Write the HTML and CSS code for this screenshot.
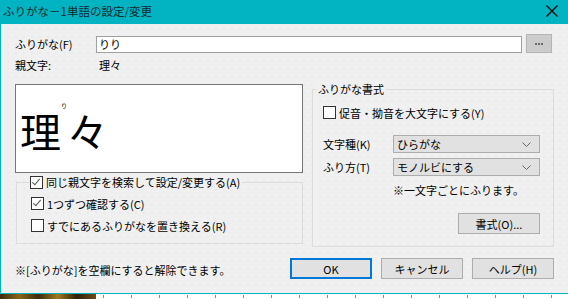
FILE: index.html
```html
<!DOCTYPE html>
<html lang="ja">
<head>
<meta charset="utf-8">
<link rel="stylesheet" href="styles.css">
</head>
<body>
<div class="window">
  <div class="titlebar">
    <span class="title">ふりがな－1単語の設定/変更</span>
    <svg class="close" width="12" height="12" viewBox="0 0 12 12"><path d="M0.5 0.5 L11.5 11.5 M11.5 0.5 L0.5 11.5" stroke="#000" stroke-width="1.2" fill="none"/></svg>
  </div>
  <div class="content">
    <div class="row row-furi">
      <span class="label lbl-furi">ふりがな(F)</span>
      <div class="input">りり</div>
      <div class="dots-btn"><span></span><span></span><span></span></div>
    </div>
    <div class="row row-oya">
      <span class="label lbl-oya">親文字:</span>
      <span class="oya-text">理々</span>
    </div>
    <div class="main">
      <div class="col-left">
        <div class="preview">
          <span class="big">理</span><span class="ruby">り</span><span class="big">々</span>
        </div>
        <div class="group group-left">
          <div class="legend check-legend"><span class="cb checked"></span><span>同じ親文字を検索して設定/変更する(A)</span></div>
          <div class="opt opt1"><span class="cb checked"></span><span>1つずつ確認する(C)</span></div>
          <div class="opt opt2"><span class="cb"></span><span>すでにあるふりがなを置き換える(R)</span></div>
        </div>
      </div>
      <div class="group group-right">
        <div class="legend text-legend">ふりがな書式</div>
        <div class="opt opt-y"><span class="cb"></span><span>促音・拗音を大文字にする(Y)</span></div>
        <div class="field field1">
          <span class="label">文字種(K)</span>
          <div class="select"><span>ひらがな</span><svg width="9" height="5" viewBox="0 0 9 5"><path d="M0.5 0.5 L4.5 4.5 L8.5 0.5" stroke="#666" fill="none"/></svg></div>
        </div>
        <div class="field field2">
          <span class="label">ふり方(T)</span>
          <div class="select"><span>モノルビにする</span><svg width="9" height="5" viewBox="0 0 9 5"><path d="M0.5 0.5 L4.5 4.5 L8.5 0.5" stroke="#666" fill="none"/></svg></div>
        </div>
        <div class="hint">※一文字ごとにふります。</div>
        <div class="fmt-row"><div class="btn btn-fmt">書式(O)...</div></div>
      </div>
    </div>
    <div class="footer">
      <span class="note">※[ふりがな]を空欄にすると解除できます。</span>
      <div class="btns">
        <div class="btn btn-ok">OK</div>
        <div class="btn">キャンセル</div>
        <div class="btn">ヘルプ(H)</div>
      </div>
    </div>
  </div>
</div>
<div class="desk">
  <div class="desk-img"></div>
  <div class="desk-ruler"></div>
</div>
</body>
</html>
```
FILE: styles.css
```css
html, body {
  margin: 0;
  padding: 0;
}
body {
  width: 568px;
  height: 299px;
  overflow: hidden;
  font-family: "Noto Sans CJK JP", "Noto Sans", sans-serif;
  font-size: 11px;
  color: #000;
  background: #fff;
}
.window {
  height: 293px;
  border-left: 1px solid #02b4c2;
  border-bottom: 1px solid #02b4c2;
  background-color: #f0f0f0;
  background-image: radial-gradient(circle, #d4d4d4 0.55px, transparent 0.75px);
  background-size: 8px 8px;
  background-position: 3px 1px;
  display: flex;
  flex-direction: column;
}
.titlebar {
  height: 24px;
  flex: none;
  background: #02b4c2;
  display: flex;
  align-items: center;
  justify-content: space-between;
  padding: 0 10px 0 2px;
}
.title {
  font-size: 11.5px;
  color: #0b2b2e;
  line-height: 14px;
  margin-top: -3px;
}
.close {
  margin-top: -2px;
}
.content {
  flex: 1;
  padding: 10px 14px 0 14px;
  display: flex;
  flex-direction: column;
}
.row {
  display: flex;
  align-items: center;
}
.row-furi {
  height: 19px;
}
.lbl-furi {
  width: 81px;
}
.input {
  width: 420px;
  height: 15px;
  border: 1px solid #a0a0a0;
  background: #fff;
  padding: 0 2px;
  line-height: 15px;
  margin-top: 1px;
}
.dots-btn {
  margin-left: 4px;
  width: 24px;
  height: 17px;
  background: #cccccc;
  border: 1px solid #b4b4b4;
  display: flex;
  justify-content: center;
  align-items: center;
  gap: 1px;
}
.dots-btn span {
  width: 2px;
  height: 2px;
  background: #6a6a6a;
}
.row-oya {
  height: 18px;
  margin-top: 3px;
}
.lbl-oya {
  width: 84px;
}
.main {
  display: flex;
  margin-top: 10px;
  height: 162px;
}
.col-left {
  width: 288px;
  display: flex;
  flex-direction: column;
}
.preview {
  border: 1px solid #767676;
  background: #fff;
  box-sizing: border-box;
  height: 89px;
  padding: 23px 0 0 4px;
  display: flex;
  align-items: flex-start;
}
.ruby {
  font-size: 6px;
  line-height: 7px;
  height: 7px;
  width: 6px;
  margin-top: -6px;
}
.big {
  font-size: 41px;
  line-height: 44px;
  height: 44px;
}
.group {
  border: 1px solid #dcdcdc;
  position: relative;
}
.group-left {
  margin-top: 9px;
  margin-left: 1px;
  height: 62px;
  box-sizing: border-box;
  padding: 7px 0 0 14px;
}
.legend {
  position: absolute;
  top: -8px;
  background: #f0f0f0;
  display: flex;
  align-items: center;
  height: 14px;
}
.check-legend {
  left: 13px;
  padding-right: 2px;
}
.text-legend {
  left: 3px;
  padding: 0 2px;
}
.opt {
  display: flex;
  align-items: center;
  height: 13px;
}
.cb {
  width: 11px;
  height: 11px;
  border: 1px solid #333;
  background: #fff;
  margin-right: 3px;
  position: relative;
  flex: none;
}
.cb.checked::after {
  content: "";
  position: absolute;
  left: 3px;
  top: 0px;
  width: 3px;
  height: 7px;
  border-right: 1.3px solid #555;
  border-bottom: 1.3px solid #555;
  transform: rotate(40deg);
}
.opt1 {
  margin-top: 7px;
}
.opt2 {
  margin-top: 9px;
}
.group-right {
  margin-left: 9px;
  margin-top: 5px;
  width: 242px;
  height: 158px;
  box-sizing: border-box;
  padding: 14px 0 0 10px;
}
.opt-y {
  margin-top: 2px;
}
.field {
  display: flex;
  align-items: center;
  height: 20px;
}
.field .label {
  width: 70px;
}
.field1 {
  margin-top: 15px;
}
.field2 {
  margin-top: 3px;
}
.select {
  height: 18px;
  border: 1px solid #adadad;
  background: #e1e1e1;
  display: flex;
  align-items: center;
  justify-content: space-between;
  padding: 0 8px 0 3px;
  box-sizing: border-box;
  width: 147px;
}
.hint {
  margin-top: 6px;
  margin-left: 70px;
  height: 14px;
  line-height: 14px;
}
.fmt-row {
  display: flex;
  justify-content: flex-end;
  padding-right: 13px;
  margin-top: 16px;
}
.btn {
  width: 82px;
  height: 21px;
  box-sizing: border-box;
  border: 1px solid #adadad;
  background: #e1e1e1;
  display: flex;
  align-items: center;
  justify-content: center;
}
.btn-ok {
  border: 2px solid #0078d7;
}
.footer {
  display: flex;
  align-items: center;
  justify-content: space-between;
  margin-top: 12px;
  height: 21px;
}
.note {
  margin-top: 2px;
}
.btns {
  display: flex;
  gap: 9px;
}
.desk {
  height: 5px;
  display: flex;
}
.desk-img {
  width: 96px;
  background: linear-gradient(90deg, #3a2a10, #8a6418 20%, #3c2c0c 40%, #a07a20 60%, #2c2008 80%, #6c4e14);
}
.desk-ruler {
  flex: 1;
  background-color: #fff;
  background-image: linear-gradient(90deg, #888 1px, transparent 1px);
  background-size: 28px 3px;
  background-repeat: repeat-x;
  background-position: 7px 1px;
}
```
